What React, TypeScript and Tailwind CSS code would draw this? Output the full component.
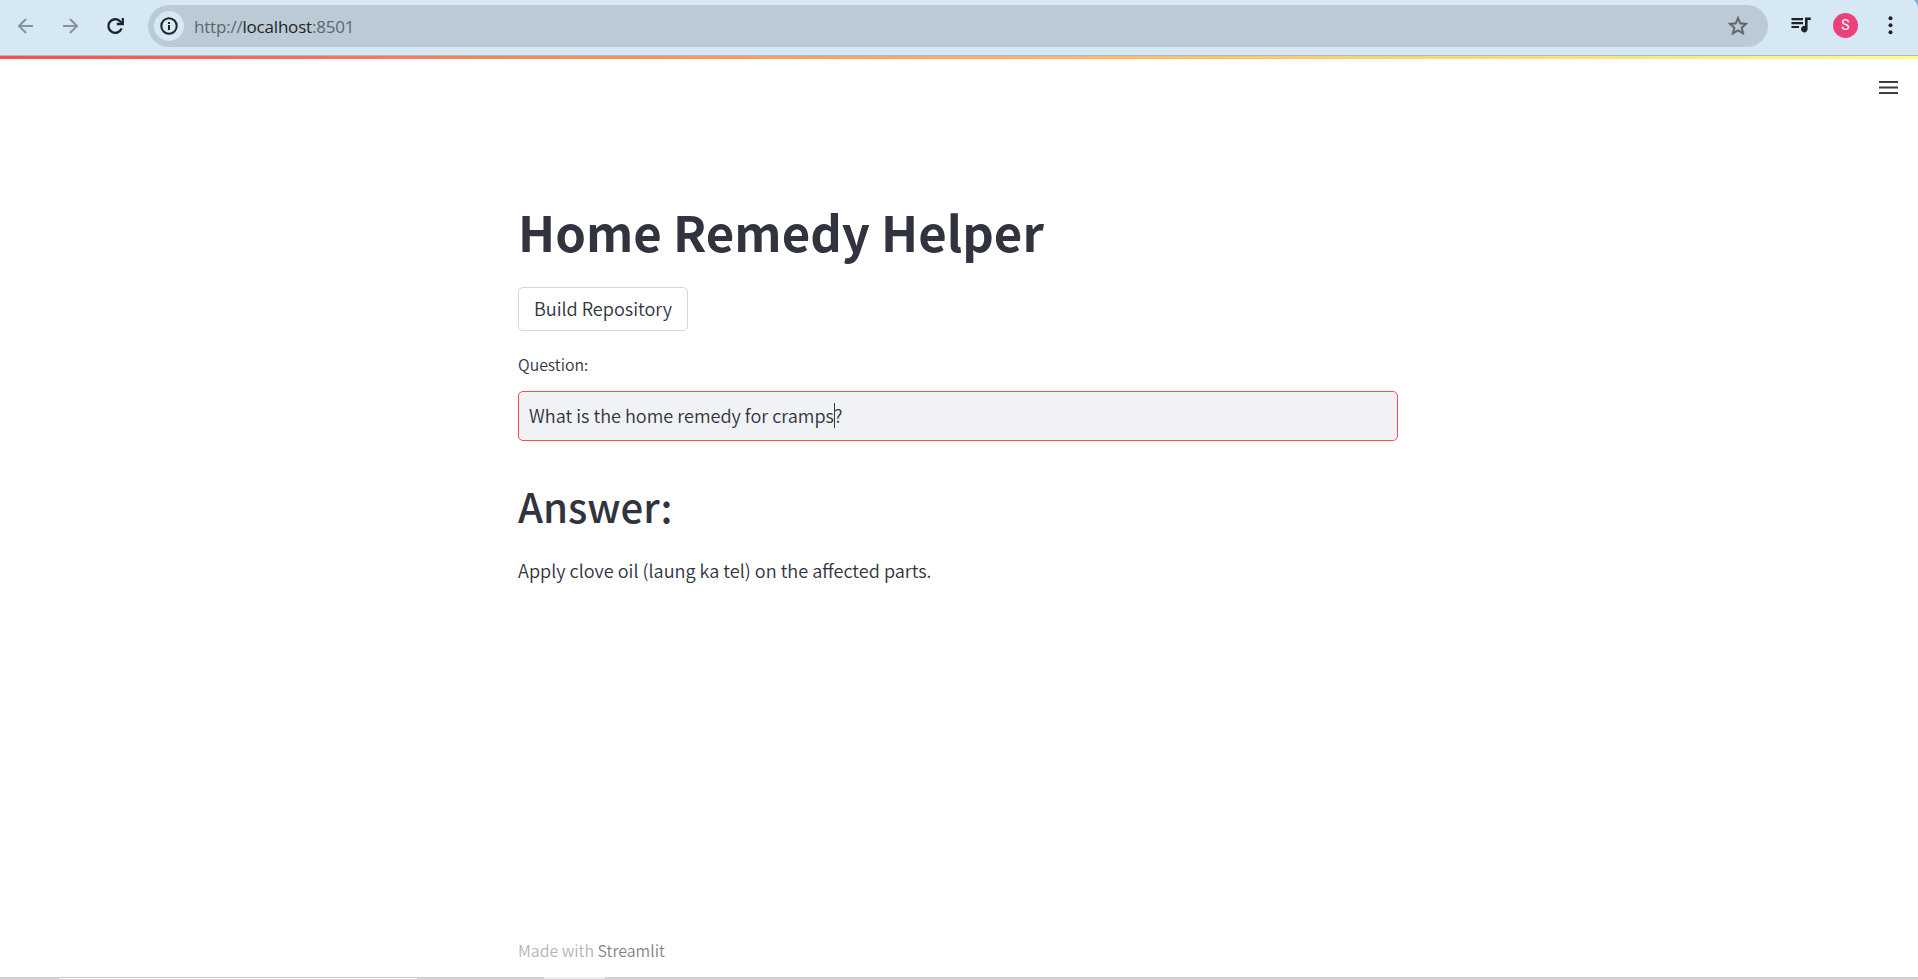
import type { ReactNode } from "react";

function Toolbar() {
  return (
    <header className="flex h-[56px] shrink-0 items-start border-b border-[#a9b9c4] bg-[#d6e8f3] font-['Open_Sans','Noto_Sans',sans-serif] font-normal">
      <div className="flex h-[52px] w-[148px] shrink-0 items-center pl-[14px]">
        <svg className="mr-[21px] size-6 shrink-0" viewBox="0 0 24 24" fill="none" stroke="#84929c" strokeWidth="2">
          <path d="M19 12H5.5M12 5l-7 7 7 7" />
        </svg>
        <svg className="mr-[21px] size-6 shrink-0" viewBox="0 0 24 24" fill="none" stroke="#84929c" strokeWidth="2">
          <path d="M4 12h13.5M11 5l7 7-7 7" />
        </svg>
        <svg className="size-6 shrink-0" viewBox="0 0 24 24" fill="none" stroke="#1f2328" strokeWidth="2.3">
          <path d="M17.6 14.3A6.8 6.8 0 1 1 16 7.2L18.3 9.5" />
          <path d="M18.8 4v6h-6" />
        </svg>
      </div>
      <div className="mt-[5px] flex h-[42px] w-[1620px] shrink-0 items-center rounded-full bg-[#bbcbd5] pl-[6px] pr-[18px]">
        <div className="flex size-[30px] items-center justify-center rounded-full bg-[#d6e8f3]">
          <svg className="size-[18px]" viewBox="0 0 18 18" fill="none" stroke="#1f2328" strokeWidth="2">
            <circle cx="9" cy="9" r="7.7" />
            <path d="M9 8v5M9 5v2" />
          </svg>
        </div>
        <div className="ml-[10px] flex-1 pt-px text-[17px] leading-6 tracking-[-0.2px] text-[#5c666f]">
          http://<span className="text-[#1f2328]">localhost</span>:8501
        </div>
        <svg className="size-6" viewBox="0 0 24 24" fill="#5f6368" stroke="#5f6368" strokeWidth="0.4">
          <path d="m22 9.24-7.19-.62L12 2 9.19 8.63 2 9.24l5.46 4.73L5.82 21 12 17.27 18.18 21l-1.63-7.03L22 9.24zM12 15.4l-3.76 2.27 1-4.28-3.32-2.88 4.38-.38L12 6.1l1.71 4.04 4.38.38-3.32 2.88 1 4.28L12 15.4z" />
        </svg>
      </div>
      <div className="flex h-[50px] items-center pl-[21px]">
        <svg className="h-[18px] w-6" viewBox="0 0 24 18" fill="#1f2328">
          <path d="M2.5 2h11.500v2.200H2.500zM2.500 6h11.500v2.200H2.500zM2.500 9.900h7.500v2.200H2.500zM16 1.500h5.800v2.500H18.600V13a3.300 3.300 0 1 1-2.600-3.100z" />
        </svg>
        <div className="ml-[20px] flex size-[25px] items-center justify-center rounded-full bg-[#ec407a] font-[Roboto,sans-serif] text-[14px] leading-none text-white">
          S
        </div>
        <svg className="ml-[20px] h-[20px] w-6" viewBox="0 0 24 20" fill="#1f2328">
          <circle cx="12.500" cy="3.200" r="2" />
          <circle cx="12.500" cy="10.200" r="2" />
          <circle cx="12.500" cy="17.200" r="2" />
        </svg>
      </div>
      <svg className="ml-auto h-[7px] w-[4px] shrink-0" viewBox="0 0 4 7" fill="#7fb0d6">
        <path d="M0 0h4v7Q3.500 3 0 0z" />
      </svg>
    </header>
  );
}

function Line({ className, children }: { className: string; children: ReactNode }) {
  return <div className={`whitespace-nowrap ${className}`}>{children}</div>;
}

function BottomEdge() {
  return (
    <div className="flex h-[2px] shrink-0 bg-[#d3d3d3]">
      <div className="w-[59px]" />
      <div className="w-[358px] border-t border-[#c6c6c6] bg-white" />
      <div className="w-[127px]" />
      <div className="w-[61px] bg-[#eeeeee]" />
    </div>
  );
}

export default function App() {
  return (
    <div className="flex h-[979px] w-[1918px] flex-col overflow-hidden bg-white font-['Noto_Sans_CJK_SC',sans-serif] font-[350] text-[#31333f]">
      <Toolbar />
      <div className="h-[3px] shrink-0 bg-linear-to-r from-[#ff4b4b] to-[#fffd80]" />
      <div className="flex h-[58px] shrink-0 justify-end pr-[20px] pt-[21px]">
        <svg className="h-[15px] w-[19px]" viewBox="0 0 19 15" fill="#3c3e4a">
          <path d="M0 1h19v2H0zM0 6.500h19v2H0zM0 12h19v2H0z" />
        </svg>
      </div>
      <main className="ml-[518px] flex w-[880px] flex-1 flex-col items-start pt-[84px]">
        <h1 className="whitespace-nowrap text-[49.1px] font-bold leading-[60px]">Home Remedy Helper</h1>
        <button className="mt-[26px] flex h-[44px] w-[170px] items-center justify-center whitespace-nowrap rounded-[5px] border border-[#d6d6d9] pb-[2px] text-[18.1px] leading-6">
          Build Repository
        </button>
        <Line className="mt-[22px] text-[15.8px] leading-6">Question:</Line>
        <div className="mt-[14px] flex h-[50px] w-[880px] items-center rounded-[5px] border border-[#ff4b4b] bg-[#f0f2f6] pb-[2px] pl-[10px] text-[18.08px] leading-6">
          <span>What is the home remedy for cramps</span>
          <span className="-mr-px h-[25px] w-px bg-[#31333f]" />
          <span>?</span>
        </div>
        <Line className="mt-[40px] text-[40.2px] font-medium leading-[50px]">Answer:</Line>
        <Line className="mt-[25px] text-[18.1px] leading-7">Apply clove oil (laung ka tel) on the affected parts.</Line>
        <Line className="mb-[14px] mt-auto text-[15.9px] leading-6 text-[#b4b4b9]">
          Made with <span className="text-[#83848b]">Streamlit</span>
        </Line>
      </main>
      <BottomEdge />
    </div>
  );
}
